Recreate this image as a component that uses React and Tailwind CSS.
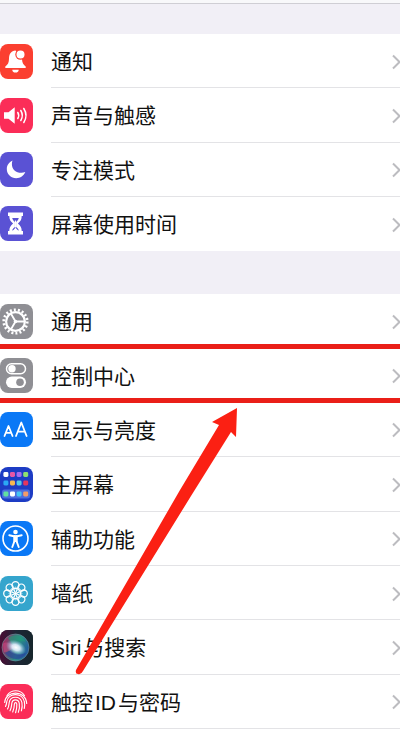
import React from "react";

const BellIcon = () => (
  <>
    <path d="M15.500 6.500c-4.300.3-6.500 3.500-6.500 8.200 0 3.800-1.200 6-3.700 7.800v1.600h20.400v-1.600c-2.500-1.800-3.500-4-3.700-7.500z" fill="#fff" />
    <circle cx="20.500" cy="10.500" r="5.200" fill="#fb3f30" />
    <circle cx="20.500" cy="10.500" r="4" fill="#fff" />
    <path d="M12.300 25.800h6.400a3.200 2.800 0 0 1-6.400 0z" fill="#fff" />
  </>
);

const SpeakerIcon = () => (
  <>
    <path d="M4 14.300h4.500l6.200-5v16.400l-6.200-5H4z" fill="#fff" />
    <g fill="none" stroke="#fff" strokeWidth="1.500" strokeLinecap="round">
      <path d="M17.800 14.500q1.800 3 0 6" />
      <path d="M20.800 12.500q3 5 0 10" />
      <path d="M23.800 10.500q4.400 7 0 14" />
    </g>
  </>
);

const MoonIcon = () => (
  <path d="M12.500 8.500c-3.400 1.600-5.700 4.700-5.700 8.500 0 5.200 4.200 9.200 9.400 9.200 4.200 0 7.700-2.500 9.100-6.200-1.300.5-2.600.8-4 .8-5.400 0-9.400-3.600-9.400-8.600 0-1.300.2-2.600.6-3.700z" fill="#fff" />
);

const HourglassIcon = () => (
  <>
    <path d="M8 6.500h15v3.400h-1.300c0 3.600-1 5.100-3.800 7.600 2.800 2.500 3.800 4 3.800 7.600H23v3.400H8v-3.400h1.300c0-3.600 1-5.100 3.800-7.600-2.800-2.500-3.800-4-3.800-7.600H8z" fill="#fff" />
    <path d="M12.200 12h6.600c-.5 1.800-1.400 3-2.700 4v5c1.400.8 2.200 1.800 2.700 3.400h-6.600c.5-1.600 1.300-2.600 2.700-3.400v-5c-1.300-1-2.200-2.200-2.700-4z" fill="#5a52d4" />
    <path d="M15.500 14.500v7" stroke="#fff" strokeWidth="1.200" />
    <path d="M12.500 25l3-3.200 3 3.200z" fill="#fff" />
  </>
);

const GearIcon = () => (
  <g fill="none" stroke="#fff">
    <circle cx="15.500" cy="17.500" r="11.700" strokeWidth="2.800" strokeDasharray="2 2.084" />
    <circle cx="15.500" cy="17.500" r="9.400" strokeWidth="2.200" />
    <path d="M15.500 17.500h9M15.500 17.500l-4.500-7.800M15.500 17.500l-4.500 7.800" strokeWidth="1.800" />
    <circle cx="15.500" cy="17.500" r="1.800" fill="#fff" stroke="none" />
  </g>
);

const TogglesIcon = () => (
  <>
    <rect x="6.500" y="5.700" width="19" height="10" rx="5" fill="none" stroke="#fff" strokeWidth="1.500" />
    <circle cx="12" cy="10.700" r="3.700" fill="#fff" />
    <rect x="6" y="18.500" width="20" height="11.500" rx="5.750" fill="#fff" />
    <circle cx="20" cy="24.200" r="3.800" fill="#8f8f94" />
  </>
);

const LettersIcon = () => (
  <g fill="none" stroke="#fff" strokeWidth="1.800" strokeLinejoin="round" strokeLinecap="round">
    <path d="M4.500 24l4-10 4 10M6 20.800h5" />
    <path d="M16 24l5.300-13.500L26.600 24M18 19.700h6.600" />
  </g>
);

const dots = [
  ["#fff", "#e957a5", "#a66bf0", "#8fe070"],
  ["#2ba8f5", "#f6b850", "#52c8e8", "#e2365f"],
  ["#62dfa0", "#fff", "#45c4f4", "#f49b68"],
];

const HomeIcon = () => (
  <>
    <rect x="2" y="22.500" width="28" height="9" rx="2.500" fill="#4a6de0" />
    {dots.map((row, r) =>
      row.map((color, c) => (
        <rect key={`${r}-${c}`} x={3.4 + c * 6.6} y={[5, 13.5, 24.4][r]} width="5" height="5" rx="1.400" fill={color} />
      ))
    )}
  </>
);

const PersonIcon = () => (
  <>
    <circle cx="15.500" cy="17.500" r="12.500" fill="none" stroke="#fff" strokeWidth="1.600" />
    <circle cx="15.500" cy="11" r="2.300" fill="#fff" />
    <path d="M9.300 14.300l4.500.9h3.400l4.500-.9M14.500 15v5l-2.200 6M16.500 15v5l2.200 6" fill="none" stroke="#fff" strokeWidth="1.900" strokeLinecap="round" />
    <path d="M13.500 14.500h4v6.500h-4z" fill="#fff" />
  </>
);

const petals = [0, 45, 90, 135, 180, 225, 270, 315];

const FlowerIcon = () => (
  <g fill="none" stroke="#fff" strokeWidth="1.300">
    {petals.map((angle) => (
      <g key={angle} transform={`rotate(${angle} 15.500 17.500)`}>
        <circle cx="15.500" cy="9.200" r="3.500" />
        <ellipse cx="15.500" cy="13.500" rx="1.300" ry="2.300" strokeWidth=".9" />
      </g>
    ))}
    <circle cx="15.500" cy="17.500" r="1.500" fill="#fff" stroke="none" />
  </g>
);

const SiriIcon = () => (
  <>
    <defs>
      <radialGradient id="siriCore">
        <stop offset="0" stopColor="#fff" />
        <stop offset=".4" stopColor="#e4f1ff" stopOpacity=".9" />
        <stop offset="1" stopColor="#8fc4e8" stopOpacity="0" />
      </radialGradient>
      <linearGradient id="siriOrb" x1="0" y1=".3" x2="1" y2=".6">
        <stop offset="0" stopColor="#b3215c" />
        <stop offset=".35" stopColor="#4f6278" />
        <stop offset=".6" stopColor="#2b8f86" />
        <stop offset="1" stopColor="#2456a0" />
      </linearGradient>
      <linearGradient id="siriBack" x1="0" y1="0" x2="1" y2="0">
        <stop offset="0" stopColor="#4a0c34" />
        <stop offset=".5" stopColor="#1d2736" />
        <stop offset="1" stopColor="#16262c" />
      </linearGradient>
    </defs>
    <rect width="33" height="35" fill="url(#siriBack)" />
    <circle cx="15.500" cy="17.500" r="13.500" fill="url(#siriOrb)" />
    <path d="M8 8c6-5 15-3 18 4-5-2-10-1-13 3z" fill="#1f9c78" opacity=".6" />
    <path d="M5 23c6 8 17 8 21 0-6 2-12 1-15-3z" fill="#2a3c9c" opacity=".6" />
    <path d="M3 14c3-3 8-1 12 3-4 3-8 5-11 5z" fill="#d44a86" opacity=".5" />
    <ellipse cx="16" cy="17.500" rx="10.500" ry="7" fill="url(#siriCore)" transform="rotate(25 16 17.500)" />
    <circle cx="15.500" cy="17.500" r="13.500" fill="none" stroke="#6b9aa0" strokeWidth=".8" opacity=".7" />
  </>
);

const FingerprintIcon = () => (
  <g fill="none" stroke="#fff" strokeWidth="1.150" strokeLinecap="round">
    <path d="M7 11.500c4.500-6.300 13-6.300 17.500 0" />
    <path d="M4.700 18.500c.6-12 20.800-13.500 22 1" />
    <path d="M5.500 22.500c1-2 1-3 1.300-5 1.500-9 15.500-9.500 17.500 0 .6 2.500.5 4.500 0 7" />
    <path d="M7.500 25c1.500-2.500 1.400-4.500 1.700-6.500 1-7 11.200-7 12.700 0 .6 3 .3 5.500-.5 8.300" />
    <path d="M10 26.800c1.600-3 1.500-5 1.800-7.500.6-4.500 6.600-4.600 7.500 0 .5 3 0 6-1 9" />
    <path d="M12.700 28c1.400-3 1.600-5.500 1.700-8 .2-1.800 2.200-1.800 2.400 0 .2 3-.2 5.700-1.200 8.700" />
  </g>
);

const groups = [
  {
    size: "h-[217px] auto-rows-fr",
    items: [
      { label: "通知", bg: "bg-[#fb3f30]", Icon: BellIcon },
      { label: "声音与触感", bg: "bg-[#fb2d58]", Icon: SpeakerIcon },
      { label: "专注模式", bg: "bg-[#5a52d4]", Icon: MoonIcon },
      { label: "屏幕使用时间", bg: "bg-[#5a52d4]", Icon: HourglassIcon },
    ],
  },
  {
    size: "h-[435px] auto-rows-fr",
    items: [
      { label: "通用", bg: "bg-[#8f8f94]", Icon: GearIcon },
      { label: "控制中心", bg: "bg-[#8f8f94]", Icon: TogglesIcon, marked: true },
      { label: "显示与亮度", bg: "bg-[#0a78f6]", Icon: LettersIcon },
      { label: "主屏幕", bg: "bg-[#1d3cc4]", Icon: HomeIcon },
      { label: "辅助功能", bg: "bg-[#0a78f6]", Icon: PersonIcon },
      { label: "墙纸", bg: "bg-[#35a5cd]", Icon: FlowerIcon },
      { label: "Siri与搜索", parts: ["Siri", "与搜索"], bg: "bg-[#1d2736]", Icon: SiriIcon },
      { label: "触控ID与密码", parts: ["触控", "ID", "与密码"], bg: "bg-[#fb2d58]", Icon: FingerprintIcon },
    ],
  },
];

function Row({ item, divider }) {
  const { label, parts = [label], bg, Icon, marked } = item;
  return (
    <li className="relative min-h-0">
      <button type="button" className="flex h-full w-full items-center gap-[18px] text-left">
        <span className={`h-[35px] w-[33px] shrink-0 overflow-hidden rounded-lg ${bg}`}>
          <svg viewBox="0 0 33 35" className="block h-full w-full" aria-hidden="true">
            <Icon />
          </svg>
        </span>
        <span className={`flex h-full min-w-0 flex-1 items-center justify-between pt-0.5 ${divider ? "border-b border-[#e3e3e6]" : ""}`}>
          <span className="flex gap-0.5 whitespace-nowrap pt-px text-[21px] leading-7">
            {parts.map((part) => (
              <span key={part}>{part}</span>
            ))}
          </span>
          <svg viewBox="0 0 8 16" className="h-4 w-2 shrink-0" fill="none" stroke="#bcbcc0" strokeWidth="2" aria-hidden="true">
            <path d="M1 1.500l6.500 6.500L1 14.500" />
          </svg>
        </span>
      </button>
      {marked && <span className="pointer-events-none absolute inset-x-0 -top-1 bottom-0 border-y-[5px] border-[#ea1f18]" />}
    </li>
  );
}

export default function App() {
  return (
    <main className="relative flex min-h-screen flex-col overflow-hidden bg-white font-['Liberation_Sans','Noto_Sans_CJK_SC',sans-serif] text-[#111]">
      <div className="h-1 border-b border-[#cfced4] bg-[#f8f8fa]" />
      <div className="h-[30px] bg-[#f1eff6]" />
      {groups.map((group, g) => (
        <React.Fragment key={g}>
          {g > 0 && <div className="h-[43px] bg-[#f1eff6]" />}
          <ul className={`grid ${group.size}`}>
            {group.items.map((item, i) => (
              <Row key={item.label} item={item} divider={g > 0 || i < group.items.length - 1} />
            ))}
          </ul>
        </React.Fragment>
      ))}
      <svg
        viewBox="0 0 170 270"
        className="pointer-events-none absolute left-[70px] top-[406px] h-[270px] w-[170px]"
        aria-hidden="true"
      >
        <path d="M167 2L142 16L149 19L110 84L6 264Q5 268 8 268Q11 269 13 265L121 90L161 26L166 31Z" fill="#fb2013" />
      </svg>
    </main>
  );
}
